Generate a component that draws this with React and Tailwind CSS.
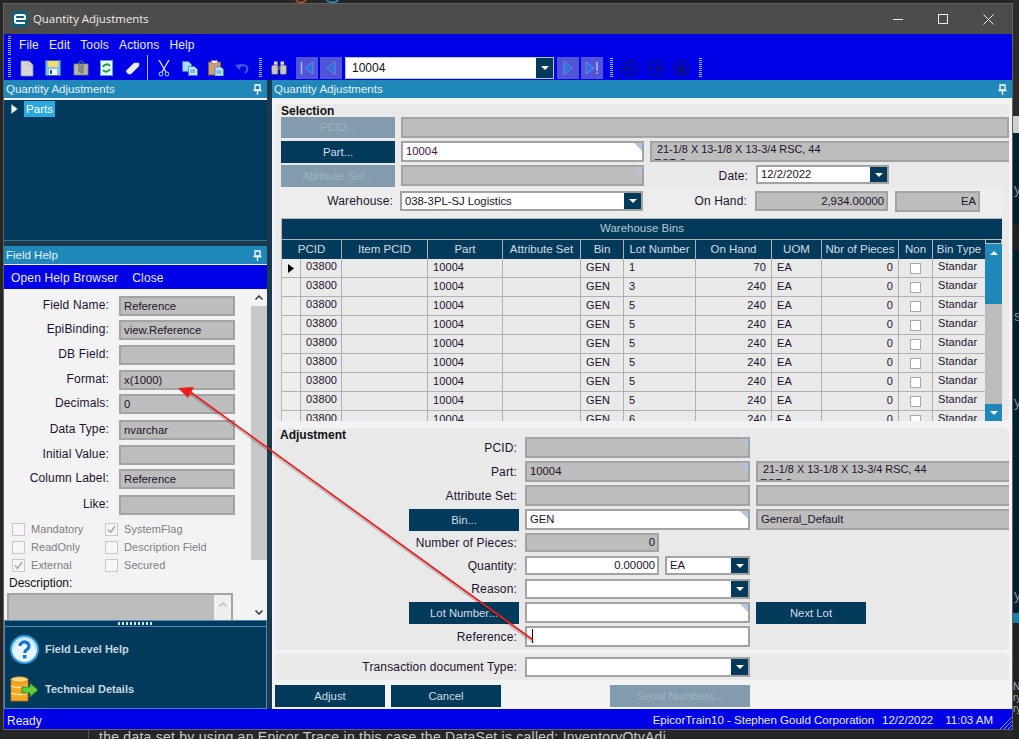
import React from "react";

const font = "font-['Liberation_Sans',Arial,sans-serif]";
const navy = "bg-[#023a5c]";
const cols =
  "grid grid-cols-[19px_41px_86px_75px_78px_43px_72px_76px_50px_77px_34px_53px]";

const Grip = ({ className = "" }) => (
  <div
    className={`w-[3px] h-[19px] bg-[repeating-linear-gradient(to_bottom,#9db4ff_0px,#9db4ff_1px,transparent_1px,transparent_2px)] ${className}`}
  />
);

const Pin = ({ className = "" }) => (
  <svg width="9" height="11" viewBox="0 0 9 11" className={className}>
    <path d="M2 1h5v5H2zM0.5 6.5h8M4.5 7v4" fill="none" stroke="#fff" strokeWidth="1.3" />
  </svg>
);

const Caret = () => (
  <svg width="8" height="4" viewBox="0 0 8 4">
    <path d="M0 0h8L4 4z" fill="#fff" />
  </svg>
);

const Corner = () => (
  <span className="absolute top-0 right-0 w-0 h-0 border-l-[8px] border-t-[8px] border-l-transparent border-t-[#b3c6df]" />
);

const Field = ({ w, h = 21, value = "", white, right, corner, dropdown, className = "" }) => (
  <div
    className={`relative flex items-center shrink-0 border-2 border-[#a3a3a3] overflow-hidden text-[11.3px] text-[#1d1230] ${
      white ? "bg-white" : "bg-[#bdbdbd]"
    } ${right ? "justify-end pr-[2px]" : "pl-[3px]"} ${className}`}
    style={{ width: w, height: h }}
  >
    <span className="whitespace-nowrap">{value}</span>
    {corner && <Corner />}
    {dropdown && (
      <span className={`absolute right-0 top-0 bottom-0 w-[17px] flex items-center justify-center ${navy}`}>
        <Caret />
      </span>
    )}
  </div>
);

const Btn = ({ children, w = 110, h = 22, disabled, className = "" }) => (
  <div
    className={`flex items-center justify-center shrink-0 text-[11.3px] ${
      disabled ? "bg-[#829cae] text-[#a0b2c0]" : `${navy} text-[#d4dde3]`
    } ${className}`}
    style={{ width: w, height: h }}
  >
    {children}
  </div>
);

const Label = ({ w, children, className = "" }) => (
  <div
    className={`shrink-0 text-right text-[12px] tracking-[0.15px] leading-[14px] text-[#1d1230] whitespace-nowrap ${className}`}
    style={{ width: w }}
  >
    {children}
  </div>
);

const TwoLine = ({ w }) => (
  <div
    className="relative shrink-0 h-[21px] border-2 border-[#a3a3a3] border-r-0 bg-[#bdbdbd] overflow-hidden text-[10.900px] leading-[14px] text-[#1d1230] pl-[5px]"
    style={{ width: w }}
  >
    <div className="-mt-[1px] w-[210px]">21-1/8 X 13-1/8 X 13-3/4 RSC, 44</div>
    <div className="-ml-[3px]">ECT C</div>
  </div>
);

// ---- toolbar drawings
const IconNew = () => (
  <svg width="14" height="17" viewBox="0 0 14 17">
    <path d="M1 1h8l4 4v11H1z" fill="#d6d6d6" stroke="#8d8d8d" strokeWidth=".8" />
    <path d="M9 1v4h4z" fill="#f2f2f2" stroke="#8d8d8d" strokeWidth=".6" />
  </svg>
);
const IconSave = () => (
  <svg width="16" height="16" viewBox="0 0 16 16">
    <rect x="0.5" y="0.5" width="15" height="15" fill="#7cc0ee" stroke="#2b6ea8" />
    <rect x="3" y="1" width="10" height="6" fill="#fbd96b" />
    <rect x="4" y="9" width="8" height="6" fill="#f4f4f4" />
    <rect x="5" y="10" width="2" height="4" fill="#245c92" />
  </svg>
);
const IconAttach = () => (
  <svg width="16" height="16" viewBox="0 0 16 16">
    <rect x="1" y="4" width="14" height="11" fill="#b9b5aa" stroke="#85827a" strokeWidth=".8" />
    <path d="M6 12V3a2 2 0 0 1 4 0v9a1 1 0 0 1-2 0V5" fill="none" stroke="#6b6b6b" strokeWidth="1.2" />
  </svg>
);
const IconRefresh = () => (
  <svg width="14" height="16" viewBox="0 0 14 16">
    <rect x="0.5" y="0.5" width="12" height="15" fill="#e9fbff" stroke="#4aa7cc" />
    <path d="M3 7a4 4 0 0 1 7-1M10 9a4 4 0 0 1-7 1" fill="none" stroke="#1d9c35" strokeWidth="2" />
  </svg>
);
const IconEraser = () => (
  <svg width="15" height="13" viewBox="0 0 15 13">
    <path d="M1 9l8-8h5v3l-8 8H3z" fill="#ececec" stroke="#b9b9b9" strokeWidth=".7" />
  </svg>
);
const IconCut = () => (
  <svg width="12" height="17" viewBox="0 0 12 17">
    <path d="M1 0l7 12M11 0L4 12" stroke="#d8d8d8" strokeWidth="1.4" />
    <circle cx="3" cy="14" r="1.8" fill="none" stroke="#7fb3f2" strokeWidth="1.2" />
    <circle cx="9" cy="14" r="1.8" fill="none" stroke="#7fb3f2" strokeWidth="1.2" />
  </svg>
);
const IconCopy = () => (
  <svg width="16" height="15" viewBox="0 0 16 15">
    <path d="M0.5 0.5h6l3 3v7h-9z" fill="#a9d8f7" stroke="#2b7fc0" strokeWidth=".7" />
    <path d="M6.5 5.5h6l3 3v6h-9z" fill="#bfe5fb" stroke="#2b7fc0" strokeWidth=".7" />
    <path d="M8 9h5M8 11h5" stroke="#2b7fc0" strokeWidth=".8" />
  </svg>
);
const IconPaste = () => (
  <svg width="16" height="16" viewBox="0 0 16 16">
    <rect x="0.5" y="2" width="12" height="13" fill="#c99f73" stroke="#7d5a3a" strokeWidth=".8" />
    <rect x="3.5" y="0.5" width="6" height="3" fill="#e9e9e9" stroke="#777" strokeWidth=".6" />
    <path d="M7 7h6l2.5 2.5V16H7z" fill="#bfe5fb" stroke="#2b7fc0" strokeWidth=".7" />
    <path d="M8.5 11h5M8.5 13h5" stroke="#2b7fc0" strokeWidth=".8" />
  </svg>
);
const IconUndo = () => (
  <svg width="15" height="12" viewBox="0 0 15 12">
    <path d="M3 6a5 4 0 0 1 9-1c1 2 0 4-2 6" fill="none" stroke="#3f5fe0" strokeWidth="2" />
    <path d="M0 3l5 5 1-6z" fill="#3f5fe0" />
  </svg>
);
const IconBino = () => (
  <svg width="16" height="14" viewBox="0 0 16 14">
    <rect x="3" y="0.5" width="3.5" height="4" fill="#d9d9d9" />
    <rect x="9.5" y="0.5" width="3.5" height="4" fill="#d9d9d9" />
    <rect x="0.5" y="4" width="6.5" height="9.5" rx="1.5" fill="#c5c5c5" stroke="#3c3c3c" strokeWidth=".6" />
    <rect x="9" y="4" width="6.5" height="9.5" rx="1.5" fill="#c5c5c5" stroke="#3c3c3c" strokeWidth=".6" />
    <rect x="7" y="5" width="2" height="4" fill="#555" />
  </svg>
);
const NavBtn = ({ dir, bar }) => (
  <div className="w-[22px] h-[22px] bg-[#5353d8] flex items-center justify-center">
    <svg width="14" height="14" viewBox="0 0 14 14">
      {dir === "left" ? (
        <path d={bar ? "M13 1v12L5 7z" : "M11 0v14L3 7z"} fill="#2f6fe0" stroke="#7fa8f0" strokeWidth=".6" />
      ) : (
        <path d={bar ? "M1 1v12L9 7z" : "M3 0v14L11 7z"} fill="#2f6fe0" stroke="#7fa8f0" strokeWidth=".6" />
      )}
      {bar && <path d={dir === "left" ? "M1.5 1v12" : "M12 1v9M12 11.5v1.5"} stroke="#a9c2f5" strokeWidth="1.5" />}
    </svg>
  </div>
);
const Circle = ({ kind }) => (
  <svg width="17" height="17" viewBox="0 0 17 17">
    <circle cx="8.5" cy="8.5" r="7.5" fill="none" stroke="#10107a" strokeWidth="1.4" />
    {kind === "back" && <path d="M13 8.5H5M8 5L4.500 8.500 8 12" fill="none" stroke="#10107a" strokeWidth="1.7" />}
    {kind === "next" && <path d="M4 8.5h8M9 5l3.500 3.500L9 12" fill="none" stroke="#10107a" strokeWidth="1.7" />}
    {kind === "home" && <path d="M8.5 4L4 8.500h1.300V13h6.400V8.500H13z" fill="#10107a" />}
  </svg>
);

const Header = ({ children, pin = true }) => (
  <div className="h-[18px] bg-[#2088b8] flex items-center justify-between pl-[2px] pr-[5px] text-[11.5px] text-[#e8f0f4] shrink-0">
    <span className="pt-[1px]">{children}</span>
    {pin && <Pin />}
  </div>
);

const helpRows = [
  ["Field Name:", "Reference", "h-[24px]"],
  ["EpiBinding:", "view.Reference", "h-[25px]"],
  ["DB Field:", "", "h-[25px]"],
  ["Format:", "x(1000)", "h-[24px]"],
  ["Decimals:", "0", "h-[26px]"],
  ["Data Type:", "nvarchar", "h-[25px]"],
  ["Initial Value:", "", "h-[24px]"],
  ["Column Label:", "Reference", "h-[26px]"],
  ["Like:", "", "h-[25px]"],
];

const Check = ({ label, checked, className = "" }) => (
  <div className={`flex items-center gap-[6px] h-[18px] text-[11px] tracking-[0.05px] text-[#7d7d7d] ${className}`}>
    <span className="w-[13px] h-[13px] border border-[#c8c8c8] bg-[#f6f6f8] flex items-center justify-center shrink-0">
      {checked && (
        <svg width="9" height="9" viewBox="0 0 9 9">
          <path d="M1 4.5l2.5 3L8 1" fill="none" stroke="#a8a8a8" strokeWidth="1.4" />
        </svg>
      )}
    </span>
    {label}
  </div>
);

const binRows = ["1", "3", "5", "5", "5", "5", "5", "5", "6"];

const Cell = ({ children, right, className = "" }) => (
  <div
    className={`h-[19px] border-r border-b border-[#b0b0b0] overflow-hidden whitespace-nowrap text-[11px] tracking-[0.1px] leading-[17px] px-[5px] text-[#1d1230] ${
      right ? "text-right" : ""
    } ${className}`}
  >
    {children}
  </div>
);

const BinsGrid = () => (
  <div className="relative mt-[2px] w-[721px] h-[203px] border-t border-l border-[#b9b9b9] overflow-hidden bg-[#e9e9e9]">
    <div className={`h-[21px] ${navy} flex items-center justify-center text-[11.5px] text-[#b7c6d1] border-b border-[#b0b0b0]`}>
      Warehouse Bins
    </div>
    <div className={`${cols} ${navy} h-[19px] text-[11.5px] text-[#d4dde3] text-center leading-[18px]`}>
      <div className="col-span-2 border-r border-[#b0b0b0]">PCID</div>
      {["Item PCID", "Part", "Attribute Set", "Bin", "Lot Number", "On Hand", "UOM", "Nbr of Pieces", "Non", "Bin Type"].map((h) => (
        <div key={h} className="border-r border-[#b0b0b0] whitespace-nowrap overflow-hidden">
          {h}
        </div>
      ))}
    </div>
    {binRows.map((lot, i) => (
      <div key={i} className={cols}>
        <div className="h-[19px] bg-[#eeeeee] border-r border-b border-[#b0b0b0] flex items-center justify-center">
          {i === 0 && (
            <svg width="6" height="9" viewBox="0 0 6 9">
              <path d="M0 0l6 4.5L0 9z" fill="#000" />
            </svg>
          )}
        </div>
        <Cell className="!leading-[15px]">03800</Cell>
        <Cell />
        <Cell>10004</Cell>
        <Cell />
        <Cell>GEN</Cell>
        <Cell>{lot}</Cell>
        <Cell right>{i === 0 ? "70" : "240"}</Cell>
        <Cell>EA</Cell>
        <Cell right>0</Cell>
        <Cell className="flex items-center justify-center">
          <span className="w-[11px] h-[11px] bg-white border border-[#a8a8a8]" />
        </Cell>
        <Cell className="!leading-[15px]">Standar</Cell>
      </div>
    ))}
    <div className="absolute right-0 top-[20px] bottom-0 w-[17px] bg-[#bdbdbd] flex flex-col">
      <div className="h-[5px] bg-[#023a5c] border border-[#bdbdbd]" />
      <div className="h-[60px] bg-[#2088b8] flex justify-center pt-[7px]">
        <svg width="8" height="4" viewBox="0 0 8 4">
          <path d="M0 4h8L4 0z" fill="#fff" />
        </svg>
      </div>
      <div className="mt-auto h-[17px] bg-[#2088b8] flex items-center justify-center">
        <Caret />
      </div>
    </div>
  </div>
);

const Selection = () => (
  <div className="bg-[#e9e9e9] rounded-[5px] mx-[3px] mt-[6px] h-[317px] pl-[6px] shrink-0">
    <div className="font-bold text-[12px] leading-[15px] text-[#111] h-[13px]">Selection</div>
    <div className="flex gap-[6px] h-[21px]">
      <Btn w={114} h={21} disabled>PCID...</Btn>
      <Field w={608} />
    </div>
    <div className="flex gap-[6px] mt-[3px] h-[22px]">
      <Btn w={114} h={22}>Part...</Btn>
      <Field w={243} white corner value={<span className="text-[#4a1050]">10004</span>} />
      <TwoLine w={359} />
    </div>
    <div className="flex mt-[2px] h-[22px]">
      <Btn w={114} h={22} disabled>Attribute Set...</Btn>
      <Field w={243} corner className="ml-[6px]" />
      <Label w={104} className="pt-[4px]">Date:</Label>
      <Field w={133} h={19} white value="12/2/2022" dropdown className="ml-[8px]" />
    </div>
    <div className="flex items-start h-[29px] -ml-[1px] mr-[5px] pt-[4px] rounded-[5px] bg-[#ededed]">
      <Label w={113} className="pt-[3px]">Warehouse:</Label>
      <Field w={243} h={20} white value="038-3PL-SJ Logistics" dropdown className="ml-[7px]" />
      <Label w={104} className="pt-[3px]">On Hand:</Label>
      <Field w={133} h={20} value="2,934.00000" right className="ml-[8px]" />
      <Field w={85} h={21} value="EA" right className="ml-[7px]" />
    </div>
    <BinsGrid />
  </div>
);

const AdjRow = ({ label, h = 21, mt = 3, children }) => (
  <div className="flex items-center shrink-0" style={{ height: h, marginTop: mt }}>
    <Label w={242}>{label}</Label>
    <div className="ml-[8px] flex gap-[6px]">{children}</div>
  </div>
);

const Adjustment = () => (
  <div className="relative bg-[#e9e9e9] rounded-[5px] mx-[3px] mt-[7px] h-[222px] shrink-0 flex flex-col">
    <div className="absolute left-[5px] top-[1px] font-bold text-[12px] leading-[13px] text-[#111]">Adjustment</div>
    <AdjRow label="PCID:" mt={9}>
      <Field w={225} corner />
    </AdjRow>
    <AdjRow label="Part:">
      <Field w={225} corner value="10004" />
      <TwoLine w={253} />
    </AdjRow>
    <AdjRow label="Attribute Set:">
      <Field w={225} />
      <Field w={253} className="border-r-0" />
    </AdjRow>
    <div className="flex h-[21px] mt-[3px] shrink-0">
      <Btn className="ml-[134px]">Bin...</Btn>
      <Field w={225} white corner value="GEN" className="ml-[6px]" />
      <Field w={253} value="General_Default" className="ml-[6px] border-r-0" />
    </div>
    <AdjRow label="Number of Pieces:" h={19}>
      <Field w={134} h={19} value="0" right />
    </AdjRow>
    <AdjRow label="Quantity:" h={19} mt={4}>
      <Field w={134} h={19} white value="0.00000" right />
      <Field w={85} h={19} white value="EA" dropdown />
    </AdjRow>
    <AdjRow label="Reason:" h={20} mt={4}>
      <Field w={225} h={20} white dropdown />
    </AdjRow>
    <div className="flex h-[21px] mt-[3px] shrink-0">
      <Btn className="ml-[134px]">Lot Number...</Btn>
      <Field w={225} white corner className="ml-[6px]" />
      <Btn className="ml-[6px]">Next Lot</Btn>
    </div>
    <AdjRow label="Reference:">
      <Field w={225} white value={<span className="inline-block w-px h-[14px] bg-black mt-[3px] ml-[2px]" />} />
    </AdjRow>
  </div>
);

const RightPanel = () => (
  <div className="w-[740px] flex flex-col bg-[#f3f3f6] shrink-0">
    <Header>Quantity Adjustments</Header>
    <Selection />
    <Adjustment />
    <div className="flex items-center bg-[#e9e9e9] rounded-[5px] mx-[3px] mt-[3px] h-[27px] shrink-0">
      <Label w={242}>Transaction document Type:</Label>
      <Field w={225} h={20} white dropdown className="ml-[8px]" />
    </div>
    <div className="flex mt-[5px] shrink-0">
      <Btn className="ml-[3px]">Adjust</Btn>
      <Btn className="ml-[6px]">Cancel</Btn>
      <Btn w={140} disabled className="ml-[109px]">Serial Numbers...</Btn>
    </div>
  </div>
);

const FieldHelp = () => (
  <div className="flex-1 flex min-h-0 bg-[#f3f3f6]">
    <div className="w-[246px] overflow-hidden shrink-0">
      <div className="pt-[7px]">
        {helpRows.map(([label, value, h]) => (
          <div key={label} className={`flex items-start ${h}`}>
            <Label w={105} className="pt-[2px]">{label}</Label>
            <Field w={116} h={20} value={value} className="ml-[10px]" />
          </div>
        ))}
      </div>
      <div className="grid grid-cols-[93px_1fr] ml-[8px]">
        <Check label="Mandatory" />
        <Check label="SystemFlag" checked />
        <Check label="ReadOnly" />
        <Check label="Description Field" />
        <Check label="External" checked />
        <Check label="Secured" />
      </div>
      <div className="ml-[5px] mt-[2px] text-[12px] leading-[14px] text-[#111]">Description:</div>
      <div className="flex ml-[3px] mt-[3px] w-[226px] h-[30px] border-2 border-[#a3a3a3] bg-[#bdbdbd] justify-end">
        <div className="w-[17px] bg-[#efefef] flex justify-center pt-[7px]">
          <svg width="8" height="5" viewBox="0 0 8 5">
            <path d="M0.5 4.5L4 1l3.5 3.5" fill="none" stroke="#bcbcbc" strokeWidth="1.5" />
          </svg>
        </div>
      </div>
    </div>
    <div className="w-[16px] ml-[1px] flex flex-col items-stretch">
      <div className="h-[17px] flex items-center justify-center">
        <svg width="8" height="5" viewBox="0 0 8 5">
          <path d="M0.5 4.5L4 1l3.5 3.5" fill="none" stroke="#333" strokeWidth="1.5" />
        </svg>
      </div>
      <div className="h-[254px] bg-[#c8c8c8]" />
      <div className="flex-1 flex items-end justify-center pb-[5px]">
        <svg width="8" height="5" viewBox="0 0 8 5">
          <path d="M0.5 0.5L4 4l3.5-3.5" fill="none" stroke="#333" strokeWidth="1.5" />
        </svg>
      </div>
    </div>
  </div>
);

const HelpIcon = () => (
  <svg width="29" height="29" viewBox="0 0 29 29">
    <circle cx="14.5" cy="14.5" r="13.5" fill="#e7f6ff" stroke="#2c9fe4" strokeWidth="2" />
    <path d="M3.5 14.5a11 11 0 0 1 22 0" fill="none" stroke="#bfe6fb" strokeWidth="2" />
    <path d="M10 11a4.5 4 0 1 1 7 3.3c-1.6 1-2.3 1.700-2.300 3.700" fill="none" stroke="#0f74d4" strokeWidth="3.200" />
    <rect x="13" y="20" width="3.400" height="3.400" fill="#0f74d4" />
  </svg>
);

const DbIcon = () => (
  <svg width="29" height="27" viewBox="0 0 29 27">
    <rect x="1" y="3" width="17" height="22" fill="#f7a823" stroke="#b5750d" strokeWidth=".7" />
    <ellipse cx="9.500" cy="3.500" rx="8.500" ry="2.800" fill="#ffd67a" stroke="#b5750d" strokeWidth=".7" />
    <path d="M1 10c3 2 14 2 17 0M1 17c3 2 14 2 17 0" fill="none" stroke="#ffe3a0" strokeWidth="1.300" />
    <path d="M12 11h8V7l8 7-8 7v-4h-8z" fill="#63cc3a" stroke="#1f7a1f" strokeWidth=".8" />
  </svg>
);

const LeftPanel = () => (
  <div className="w-[263px] flex flex-col shrink-0">
    <Header>Quantity Adjustments</Header>
    <div className={`h-[143px] shrink-0 border-t-2 border-[#f3f3f6] ${navy} border-b border-b-[#3e6f8f] pt-[1px] pl-[7px] flex items-start text-[11.5px]`}>
      <svg width="7" height="10" viewBox="0 0 7 10" className="mt-[3px] mr-[6px]">
        <path d="M0.500 0.500l6 4.500-6 4.500z" fill="#f4f4f4" stroke="#9fb4c2" strokeWidth=".6" />
      </svg>
      <span className="bg-[#2ca8e0] text-white h-[16px] w-[31px] text-center leading-[16px]">Parts</span>
    </div>
    <div className="h-[5px] shrink-0 bg-[#1a3a4e]" />
    <Header>Field Help</Header>
    <div className="h-[25px] shrink-0 border-t border-[#f3f3f6] bg-[#0000e6] flex items-center pt-[2px] text-[12px] tracking-[0.15px] text-[#e8ecff] pl-[7px] gap-[14px]">
      <span>Open Help Browser</span>
      <span>Close</span>
    </div>
    <div className="flex-1 min-h-0 flex flex-col">
      <FieldHelp />
    </div>
    <div className={`h-[89px] shrink-0 ${navy} border border-[#4c88b8] flex flex-col`}>
      <div className="h-[6px] border-b border-[#4c88b8] flex justify-center items-center">
        <span className="w-[36px] h-[3px] bg-[repeating-linear-gradient(to_right,#d7e6f2_0px,#d7e6f2_2px,transparent_2px,transparent_4px)]" />
      </div>
      <div className="flex items-center h-[40px] mt-[2px] pl-[5px] gap-[6px] font-bold text-[11px] text-[#c9d8e2]">
        <HelpIcon />
        Field Level Help
      </div>
      <div className="flex items-center h-[30px] mt-[5px] pl-[5px] gap-[6px] font-bold text-[11px] text-[#c9d8e2]">
        <DbIcon />
        Technical Details
      </div>
    </div>
  </div>
);

const Toolbar = () => (
  <div className="h-[24px] flex items-center shrink-0">
    <Grip className="ml-[4px] h-[20px]" />
    <div className="ml-[9px]"><IconNew /></div>
    <div className="ml-[11px]"><IconSave /></div>
    <div className="ml-[12px]"><IconAttach /></div>
    <div className="ml-[11px]"><IconRefresh /></div>
    <div className="ml-[11px]"><IconEraser /></div>
    <div className="ml-[7px] w-px h-[26px] bg-[#b8b8c8]" />
    <div className="ml-[10px]"><IconCut /></div>
    <div className="ml-[12px]"><IconCopy /></div>
    <div className="ml-[10px]"><IconPaste /></div>
    <div className="ml-[11px]"><IconUndo /></div>
    <Grip className="ml-[9px] h-[20px]" />
    <div className="ml-[9px]"><IconBino /></div>
    <div className="ml-[9px] flex gap-[2px]">
      <NavBtn dir="left" bar />
      <NavBtn dir="left" />
    </div>
    <div className="ml-[3px] relative w-[209px] h-[22px] bg-white border border-[#b4c8c8] text-[12px] text-[#111] pl-[6px] leading-[20px]">
      10004
      <span className={`absolute right-0 top-0 bottom-0 w-[17px] ${navy} flex items-center justify-center`}>
        <Caret />
      </span>
    </div>
    <div className="ml-[3px] flex gap-[2px]">
      <NavBtn dir="right" />
      <NavBtn dir="right" bar />
    </div>
    <Grip className="ml-[7px] h-[20px]" />
    <div className="ml-[8px]"><Circle kind="back" /></div>
    <div className="ml-[9px]"><Circle kind="next" /></div>
    <div className="ml-[9px]"><Circle kind="home" /></div>
    <Grip className="ml-[9px] h-[20px]" />
  </div>
);

const BackStrip = () => (
  <div className="absolute right-0 top-0 bottom-0 w-[6px] flex flex-col overflow-hidden text-[#8c8c8c] text-[14px] leading-[16px]">
    <div className="h-[116px] bg-[#2b2b2b]" />
    <div className="h-[17px] bg-[#cfcfcf]" />
    <div className="h-[92px] bg-[#03202c] pt-[48px] pl-[1px]">y</div>
    <div className="h-[25px] bg-[#222222]" />
    <div className="h-[363px] bg-[#03202c] pt-[58px] pl-[1px]">
      s
      <div className="mt-[70px]">y</div>
      <div className="mt-[177px]">y</div>
    </div>
    <div className="h-[10px] bg-[#1d7ea6]" />
    <div className="flex-1 bg-[#222222] pt-[58px] text-[10px] leading-[11px] text-[#a9a9a9]">
      <div>NE</div>
      <div>ry</div>
      <div>ry</div>
    </div>
  </div>
);

const App = () => (
  <div className={`relative w-[1019px] h-[739px] overflow-hidden bg-[#262626] ${font} antialiased`}>
    <svg width="60" height="3" viewBox="0 0 60 3" className="absolute left-[293px] top-0">
      <path d="M3 0c1 3 8 3 10 0" fill="none" stroke="#b5532a" strokeWidth="1.500" />
      <path d="M34 0c1 3 9 3 11 0" fill="none" stroke="#2a8fc4" strokeWidth="1.500" />
    </svg>
    {/* bits of the page behind the window */}
    <BackStrip />
    <div className="pt-[3px] pl-[3px]">
      <div className="relative w-[1010px] h-[727px] border border-[#626262] flex flex-col bg-[#1a3a4e]">
        <div className="h-[30px] bg-[#4d4c4a] flex items-center shrink-0 pl-[8px] text-[11.4px] text-[#eeeeee] font-['Open_Sans',sans-serif]">
          <svg width="16" height="16" viewBox="0 0 16 16">
            <rect width="16" height="16" fill="#0f5f77" />
            <path d="M3 8h10V6a2 2 0 0 0-2-2H5a2 2 0 0 0-2 2v4a2 2 0 0 0 2 2h8" fill="none" stroke="#fff" strokeWidth="2" />
          </svg>
          <span className="ml-[5px]">Quantity Adjustments</span>
          <div className="ml-auto flex items-center pr-[18px] gap-[35px]">
            <svg width="10" height="10" viewBox="0 0 10 10"><path d="M0 5.500h10" stroke="#eee" /></svg>
            <svg width="10" height="10" viewBox="0 0 10 10"><rect x=".5" y=".5" width="9" height="9" fill="none" stroke="#eee" /></svg>
            <svg width="11" height="11" viewBox="0 0 11 11"><path d="M.5.500l10 10M10.500.500l-10 10" stroke="#eee" /></svg>
          </div>
        </div>
        <div className="h-[46px] bg-[#0000e6] flex flex-col shrink-0">
          <div className="h-[22px] flex items-center text-[12px] tracking-[0.15px] text-[#e8ecff]">
            <Grip className="ml-[4px] h-[11px]" />
            <div className="flex gap-[10px] ml-[8px]">
              <span>File</span>
              <span>Edit</span>
              <span>Tools</span>
              <span>Actions</span>
              <span>Help</span>
            </div>
          </div>
          <Toolbar />
        </div>
        <div className="flex flex-1 min-h-0 gap-[5px]">
          <LeftPanel />
          <RightPanel />
        </div>
        <div className="relative h-[20px] bg-[#0000e6] flex items-center pt-[3px] text-[11.5px] text-[#e8ecff] pl-[3px] shrink-0">
          <span className="text-[12px]">Ready</span>
          <span className="ml-auto">EpicorTrain10 - Stephen Gould Corporation</span>
          <span className="ml-[8px]">12/2/2022</span>
          <span className="ml-[12px] mr-[19px]">11:03 AM</span>
          <svg width="12" height="12" viewBox="0 0 12 12" className="absolute right-0 bottom-0">
            <path d="M0 12L12 0M4 12l8-8M8 12l4-4" stroke="#58a8f0" strokeWidth="1" />
          </svg>
        </div>
        {/* annotation arrow */}
        <svg width="1010" height="727" viewBox="0 0 1010 727" className="absolute left-0 top-0 pointer-events-none">
          <path d="M529 638L185 389" stroke="#000" strokeOpacity=".18" strokeWidth="2" transform="translate(1 1)" />
          <path d="M529 636L185 387" stroke="#ea1c1c" strokeWidth="1.700" />
          <path d="M174 384l16-1-6 11z" fill="#ea1c1c" />
        </svg>
      </div>
    </div>
    <div className="ml-[88px] pl-[10px] border-l border-[#555] text-[14px] leading-[16px] text-[#c9c9c9] whitespace-nowrap -mt-[1px] tracking-[0.25px]">
      the data set by using an Epicor Trace in this case the DataSet is called: InventoryQtyAdj
    </div>
  </div>
);

export default App;
